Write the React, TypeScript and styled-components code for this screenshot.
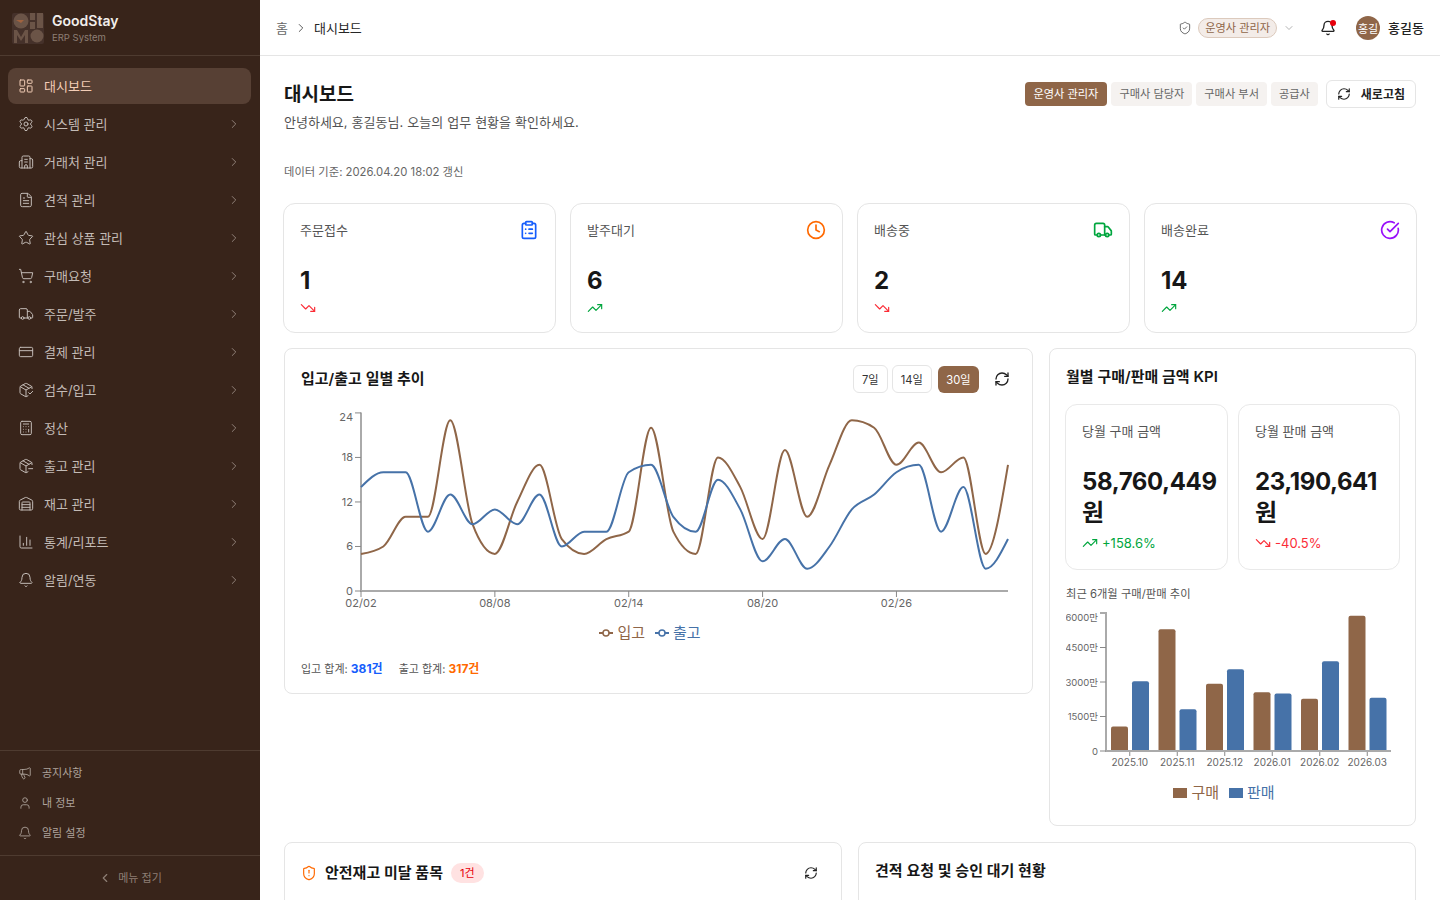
import styled, { createGlobalStyle } from "styled-components";
import {
  Bell,
  Building2,
  Calculator,
  ChartColumn,
  ChevronDown,
  ChevronLeft,
  ChevronRight,
  CircleCheckBig,
  ClipboardList,
  Clock,
  CreditCard,
  FileText,
  LayoutDashboard,
  Megaphone,
  PackageCheck,
  PackageMinus,
  RefreshCw,
  Settings,
  ShieldAlert,
  ShieldCheck,
  ShoppingCart,
  Star,
  TrendingDown,
  TrendingUp,
  Truck,
  User,
  Warehouse,
} from "lucide-react";

const BROWN = "#8f6648";
const BLUE = "#4672a8";

const GlobalStyle = createGlobalStyle`
  * { box-sizing: border-box; }
  html, body { margin: 0; padding: 0; height: 100%; overflow: hidden; }
  body {
    font-family: Inter, "Noto Sans CJK KR", sans-serif;
    color: #171717;
    background: #fff;
  }
`;

const Layout = styled.div`
  display: flex;
  width: 100%;
  height: 100vh;
  overflow: hidden;
`;

const Sidebar = styled.aside`
  display: flex;
  flex-direction: column;
  flex: 0 0 260px;
  height: 100%;
  background: #38241a;
`;

const Brand = styled.div`
  display: flex;
  align-items: center;
  gap: 8px;
  height: 56px;
  padding: 0 12px;
  border-bottom: 1px solid #4e3b30;
`;

const BrandText = styled.div`
  display: flex;
  flex-direction: column;
  gap: 2px;
  padding-top: 1px;
`;

const BrandName = styled.span`
  font-size: 14px;
  font-weight: 600;
  line-height: 17px;
  color: #f2eeeb;
`;

const BrandSub = styled.span`
  font-size: 9.5px;
  line-height: 14px;
  color: #8e7f75;
`;

const Nav = styled.nav`
  display: flex;
  flex: 1;
  flex-direction: column;
  gap: 2px;
  padding: 12px 9px 0 8px;
`;

const NavItem = styled.div<{ $active?: boolean }>`
  display: flex;
  align-items: center;
  gap: 10px;
  height: 36px;
  padding: 0 10px;
  border-radius: 8px;
  font-size: 13px;
  background: ${(p) => (p.$active ? "#574034" : "transparent")};
  color: ${(p) => (p.$active ? "#f3cdb6" : "#c3bbb6")};
`;

const NavLabel = styled.span`
  flex: 1;
  padding-bottom: 2px;
`;

const NavChevron = styled(ChevronRight)`
  color: #9a8c83;
`;

const SideFooter = styled.div`
  display: flex;
  flex-direction: column;
  padding: 7px 8px;
  border-top: 1px solid #4e3b30;
`;

const FooterItem = styled.div`
  display: flex;
  align-items: center;
  gap: 10px;
  height: 30px;
  padding: 0 10px;
  font-size: 11px;
  color: #aea39c;
`;

const FooterLabel = styled.span`
  padding-bottom: 2px;
`;

const Collapse = styled.div`
  display: flex;
  align-items: center;
  justify-content: center;
  gap: 6px;
  height: 45px;
  border-top: 1px solid #4e3b30;
  font-size: 11px;
  color: #8e7f75;
`;

const Main = styled.div`
  display: flex;
  flex: 1;
  min-width: 0;
  flex-direction: column;
  overflow: hidden;
`;

const Header = styled.header`
  display: flex;
  flex: 0 0 56px;
  align-items: center;
  justify-content: space-between;
  padding: 0 16px;
  border-bottom: 1px solid #e5e5e5;
  background: #fff;
`;

const Crumbs = styled.div`
  display: flex;
  align-items: center;
  gap: 6px;
  font-size: 13px;
  color: #262626;
`;

const CrumbHome = styled.span`
  color: #666;
`;

const CrumbChevron = styled(ChevronRight)`
  color: #444;
`;

const HeaderRight = styled.div`
  display: flex;
  align-items: center;
`;

const RoleGroup = styled.div`
  display: flex;
  align-items: center;
  gap: 6px;
  margin-right: 25px;
  color: #555;
`;

const RolePill = styled.span`
  height: 20px;
  margin-top: 1px;
  padding: 0 6px;
  border: 1px solid #dccabd;
  border-radius: 10px;
  background: #f3ece8;
  font-size: 11.2px;
  line-height: 18px;
  color: #8f6648;
`;

const RoleCaret = styled(ChevronDown)`
  color: #999;
`;

const BellWrap = styled.div`
  position: relative;
  display: flex;
  margin-right: 20px;
  color: #222;
`;

const BellDot = styled.span`
  position: absolute;
  top: 0;
  right: 0;
  width: 6px;
  height: 6px;
  border-radius: 50%;
  background: #e7000b;
`;

const Avatar = styled.div`
  display: flex;
  align-items: center;
  justify-content: center;
  width: 24px;
  height: 24px;
  margin-right: 8px;
  border-radius: 50%;
  background: #8f6648;
  font-size: 11px;
  color: #fff;
`;

const UserName = styled.span`
  font-size: 13px;
  font-weight: 500;
  color: #222;
`;

const Content = styled.main`
  display: flex;
  flex-direction: column;
  padding: 24px;
`;

const TitleRow = styled.div`
  display: flex;
  align-items: flex-start;
  justify-content: space-between;
`;

const TitleBlock = styled.div`
  display: flex;
  flex-direction: column;
`;

const PageTitle = styled.h1`
  margin: 0;
  font-size: 19px;
  font-weight: 700;
  line-height: 30px;
  color: #171717;
`;

const PageSub = styled.p`
  margin: 2px 0 0;
  font-size: 13px;
  line-height: 20px;
  word-spacing: 0.4px;
  color: #525252;
`;

const RoleTabs = styled.div`
  display: flex;
  align-items: center;
  gap: 4px;
`;

const RoleTab = styled.button<{ $active?: boolean }>`
  height: 24px;
  padding: ${(p) => (p.$active ? "0 9px 2px" : "0 8px 2px")};
  border: 0;
  border-radius: 4px;
  font-family: inherit;
  font-size: 11.2px;
  background: ${(p) => (p.$active ? "#8f6648" : "#f5f2f0")};
  color: ${(p) => (p.$active ? "#fff" : "#666")};
`;

const RefreshButton = styled.button`
  display: flex;
  align-items: center;
  gap: 10px;
  height: 28px;
  margin-left: 4px;
  padding: 0 10px 1px;
  border: 1px solid #e5e5e5;
  border-radius: 6px;
  background: #fff;
  font-family: inherit;
  font-size: 12px;
  font-weight: 600;
  color: #222;
`;

const Stamp = styled.div`
  margin-top: 32px;
  font-size: 11.3px;
  line-height: 16px;
  color: #666;
`;

const StatGrid = styled.div`
  display: grid;
  grid-template-columns: repeat(4, 273px);
  gap: 14px;
  margin: 23px -1px 0;
`;

const StatCard = styled.div`
  display: flex;
  flex-direction: column;
  height: 130px;
  padding: 16px;
  border: 1px solid #e5e5e5;
  border-radius: 12px;
  background: #fff;
`;

const StatTop = styled.div`
  display: flex;
  align-items: flex-start;
  justify-content: space-between;
  height: 20px;
`;

const StatLabel = styled.span`
  font-size: 13px;
  line-height: 20px;
  color: #555;
`;

const StatValue = styled.div`
  margin-top: 25px;
  font-size: 24px;
  font-weight: 700;
  line-height: 32px;
  color: #171717;
`;

const StatTrend = styled.div`
  display: flex;
  margin-top: 3px;
`;

const ChartRow = styled.div`
  display: grid;
  grid-template-columns: 749px 367px;
  align-items: start;
  gap: 16px;
  margin-top: 15px;
`;

const Card = styled.section`
  display: flex;
  flex-direction: column;
  padding: 16px 16px 15px;
  border: 1px solid #e5e5e5;
  border-radius: 8px;
  background: #fff;
`;

const CardHead = styled.div`
  display: flex;
  align-items: center;
  justify-content: space-between;
  height: 28px;
`;

const CardTitle = styled.h2`
  margin: 0;
  font-size: 15px;
  font-weight: 600;
  line-height: 22px;
  color: #171717;
`;

const RangeGroup = styled.div`
  display: flex;
  align-items: center;
  gap: 4px;
  padding-right: 6px;
`;

const RangeButton = styled.button<{ $active?: boolean }>`
  height: ${(p) => (p.$active ? "27px" : "28px")};
  margin-left: ${(p) => (p.$active ? "2px" : "0")};
  padding: ${(p) => (p.$active ? "0 8.5px 1px" : "0 8px 1px")};
  border: ${(p) => (p.$active ? "0" : "1px solid #e5e5e5")};
  border-radius: 6px;
  background: ${(p) => (p.$active ? "#8f6648" : "#fff")};
  font-family: inherit;
  font-size: 11.2px;
  color: ${(p) => (p.$active ? "#fff" : "#333")};
`;

const IconButton = styled.span`
  display: flex;
  margin-left: 11px;
  color: #222;
`;

const TrendSvg = styled.svg`
  display: block;
  margin-top: 12px;
`;

const BarSvg = styled.svg`
  display: block;
  margin-top: 4px;
`;

const AxisText = styled.text`
  font-size: 11px;
  fill: #666;
`;

const BarAxisText = styled.text<{ $size: number }>`
  font-size: ${(p) => p.$size}px;
  fill: #666;
`;

const Legend = styled.div<{ $shift: number; $top: number }>`
  display: flex;
  justify-content: center;
  gap: 10px;
  height: 20px;
  margin-top: ${(p) => p.$top}px;
  padding-right: ${(p) => p.$shift}px;
  font-size: 15px;
  line-height: 20px;
`;

const LegendItem = styled.span<{ $color: string }>`
  display: flex;
  align-items: center;
  gap: 4px;
  color: ${(p) => p.$color};
`;

const LegendSwatch = styled.span<{ $color: string }>`
  width: 14px;
  height: 10px;
  background: ${(p) => p.$color};
`;

const Totals = styled.div`
  display: flex;
  gap: 16px;
  margin-top: 17px;
  font-size: 11px;
  line-height: 18px;
  color: #555;
`;

const TotalValue = styled.b<{ $color: string }>`
  font-size: 12px;
  font-weight: 700;
  color: ${(p) => p.$color};
`;

const KpiPanel = styled(Card)`
  padding-bottom: 22px;
`;

const KpiHead = styled.div`
  display: flex;
  align-items: center;
  height: 22px;
  margin-top: 1px;
`;

const KpiGrid = styled.div`
  display: grid;
  grid-template-columns: 163px 162px;
  gap: 10px;
  margin: 16px 0 0 -1px;
`;

const KpiCard = styled.div`
  display: flex;
  flex-direction: column;
  height: 166px;
  padding: 16px;
  border: 1px solid #e9e9e9;
  border-radius: 12px;
`;

const KpiLabel = styled.span`
  font-size: 13px;
  line-height: 20px;
  color: #555;
`;

const KpiValue = styled.div`
  margin-top: 25px;
  font-size: 24px;
  font-weight: 700;
  line-height: 31px;
  letter-spacing: -0.4px;
  color: #171717;
`;

const KpiTrend = styled.div<{ $color: string }>`
  display: flex;
  align-items: center;
  gap: 4px;
  margin-top: 7px;
  font-size: 13px;
  line-height: 16px;
  color: ${(p) => p.$color};
`;

const MiniTitle = styled.div`
  margin-top: 16px;
  font-size: 11.3px;
  line-height: 16px;
  color: #555;
`;

const BottomRow = styled.div`
  display: grid;
  grid-template-columns: 1fr 1fr;
  gap: 16px;
  margin-top: 16px;
`;

const PanelCard = styled(Card)`
  min-height: 300px;
`;

const PanelHead = styled.div`
  display: flex;
  align-items: center;
  height: 28px;
`;

const PanelTitle = styled.h2<{ $compact?: boolean }>`
  margin: ${(p) => (p.$compact ? "-4px 0 0" : "0")};
  font-size: 15px;
  font-weight: 600;
  line-height: 22px;
  color: #171717;
`;

const PanelIcon = styled.span`
  display: flex;
  margin-right: 8px;
  color: #ff6900;
`;

const CountBadge = styled.span`
  height: 20px;
  margin-left: 8px;
  padding: 0 9px;
  border-radius: 10px;
  background: #ffe2e2;
  font-size: 11px;
  line-height: 20px;
  color: #e7000b;
`;

const PanelAction = styled.span`
  display: flex;
  margin-left: auto;
  padding-right: 7px;
  color: #222;
`;

const mainMenu = [
  { label: "시스템 관리", Icon: Settings },
  { label: "거래처 관리", Icon: Building2 },
  { label: "견적 관리", Icon: FileText },
  { label: "관심 상품 관리", Icon: Star },
  { label: "구매요청", Icon: ShoppingCart },
  { label: "주문/발주", Icon: Truck },
  { label: "결제 관리", Icon: CreditCard },
  { label: "검수/입고", Icon: PackageCheck },
  { label: "정산", Icon: Calculator },
  { label: "출고 관리", Icon: PackageMinus },
  { label: "재고 관리", Icon: Warehouse },
  { label: "통계/리포트", Icon: ChartColumn },
  { label: "알림/연동", Icon: Bell },
];

const footerMenu = [
  { label: "공지사항", Icon: Megaphone },
  { label: "내 정보", Icon: User },
  { label: "알림 설정", Icon: Bell },
];

const stats = [
  { label: "주문접수", value: 1, Icon: ClipboardList, color: "#155dfc", up: false },
  { label: "발주대기", value: 6, Icon: Clock, color: "#ff6900", up: true },
  { label: "배송중", value: 2, Icon: Truck, color: "#00a63e", up: false },
  { label: "배송완료", value: 14, Icon: CircleCheckBig, color: "#9810fa", up: true },
];

const inbound = [5, 6, 10, 10, 23, 9, 5, 12, 17, 7, 5, 7, 8, 22, 8, 5, 18, 14, 7, 19, 10, 17, 23, 22, 17, 20, 16, 18, 5, 17];
const outbound = [14, 16, 16, 8, 13, 9, 11, 9, 13, 6, 8, 8, 16, 17, 10, 8, 15, 11, 4, 7, 3, 6, 11, 13, 16, 17, 8, 14, 3, 7];

const months = [
  { label: "2025.10", buy: 1070, sell: 3030 },
  { label: "2025.11", buy: 5290, sell: 1810 },
  { label: "2025.12", buy: 2920, sell: 3550 },
  { label: "2026.01", buy: 2550, sell: 2500 },
  { label: "2026.02", buy: 2270, sell: 3900 },
  { label: "2026.03", buy: 5876, sell: 2319 },
];

// same curve as d3 curveMonotoneX
function monotonePath(pts: [number, number][]) {
  const n = pts.length;
  const h: number[] = [];
  const s: number[] = [];
  for (let i = 0; i < n - 1; i++) {
    h[i] = pts[i + 1][0] - pts[i][0];
    s[i] = (pts[i + 1][1] - pts[i][1]) / h[i];
  }
  const t: number[] = new Array(n).fill(0);
  for (let i = 1; i < n - 1; i++) {
    const p = (s[i - 1] * h[i] + s[i] * h[i - 1]) / (h[i - 1] + h[i]);
    const sa = s[i - 1] < 0 ? -1 : 1;
    const sb = s[i] < 0 ? -1 : 1;
    t[i] = (sa + sb) * Math.min(Math.abs(s[i - 1]), Math.abs(s[i]), 0.5 * Math.abs(p));
  }
  t[0] = (3 * s[0] - t[1]) / 2;
  t[n - 1] = (3 * s[n - 2] - t[n - 2]) / 2;
  let d = `M${pts[0][0]},${pts[0][1]}`;
  for (let i = 0; i < n - 1; i++) {
    const dx = h[i] / 3;
    d += `C${pts[i][0] + dx},${pts[i][1] + dx * t[i]} ${pts[i + 1][0] - dx},${pts[i + 1][1] - dx * t[i + 1]} ${pts[i + 1][0]},${pts[i + 1][1]}`;
  }
  return d;
}

function Logo() {
  return (
    <svg width="32" height="32" viewBox="0 0 32 32" fill="#6b5447">
      <rect x="0" y="1" width="32" height="31" rx="2" fill="#45312a" />
      <circle cx="9" cy="9" r="7.5" />
      <path d="M4 8h8l-3 3z" fill="#a0623f" />
      <rect x="18" y="1" width="5" height="7" />
      <rect x="25" y="1" width="6" height="15" />
      <rect x="18" y="10" width="5" height="7" />
      <path d="M2 31V18h3l4 7 4-7h3v13h-3v-8l-4 6-4-6v8z" />
      <circle cx="25" cy="24" r="6.5" />
    </svg>
  );
}

function LineMark({ color }: { color: string }) {
  return (
    <svg width="14" height="14" viewBox="0 0 14 14" fill="none">
      <path d="M0 7h4.5M9.5 7H14" stroke={color} strokeWidth="2" />
      <circle cx="7" cy="7" r="3" fill="#fff" stroke={color} strokeWidth="1.5" />
    </svg>
  );
}

function TrendChart() {
  const x0 = 361;
  const step = 647 / 29;
  const y = (v: number) => 591 - v * 7.42;
  const line = (vals: number[]) => monotonePath(vals.map((v, i) => [x0 + i * step, y(v)]));
  const xTicks = [
    { i: 0, label: "02/02" },
    { i: 6, label: "08/08" },
    { i: 12, label: "02/14" },
    { i: 18, label: "08/20" },
    { i: 24, label: "02/26" },
  ];
  return (
    <TrendSvg width="715" height="215" viewBox="301 405 715 215" fill="none">
      <path d="M361 412.5V591H1008" stroke="#aaa" strokeWidth="2" />
      {[0, 6, 12, 18, 24].map((v) => (
        <g key={v}>
          <path d={`M355 ${y(v)}H361`} stroke="#888" />
          <AxisText x="353" y={(v === 24 ? y(v) + 4 : y(v)) + 4} textAnchor="end">
            {v}
          </AxisText>
        </g>
      ))}
      {xTicks.map((t) => (
        <g key={t.label}>
          <path d={`M${x0 + t.i * step} 591v6`} stroke="#888" />
          <AxisText x={x0 + t.i * step} y="607" textAnchor="middle">
            {t.label}
          </AxisText>
        </g>
      ))}
      <path d={line(inbound)} stroke={BROWN} strokeWidth="2" />
      <path d={line(outbound)} stroke={BLUE} strokeWidth="2" />
    </TrendSvg>
  );
}

function MonthlyChart() {
  const y = (v: number) => 751 - v * 0.023;
  const cat = 285 / 6;
  return (
    <BarSvg width="334" height="170" viewBox="1066 606 334 170" fill="none">
      {months.map((m, i) => {
        const left = 1106 + i * cat;
        return (
          <g key={m.label}>
            <path
              d={`M${left + 5} 751V${y(m.buy) + 2}q0-2 2-2h13q2 0 2 2V751z`}
              fill={BROWN}
            />
            <path
              d={`M${left + 26} 751V${y(m.sell) + 2}q0-2 2-2h13q2 0 2 2V751z`}
              fill={BLUE}
            />
            <path d={`M${left + cat / 2} 751v5`} stroke="#888" />
            <BarAxisText $size={10} x={left + cat / 2} y="766" textAnchor="middle">
              {m.label}
            </BarAxisText>
          </g>
        );
      })}
      <path d="M1100 613H1106V751H1391" stroke="#aaa" strokeWidth="2" />
      {[1500, 3000, 4500].map((v) => (
        <path key={v} d={`M1100 ${y(v)}H1106`} stroke="#888" />
      ))}
      <path d="M1100 751H1106" stroke="#888" />
      {[0, 1500, 3000, 4500, 6000].map((v) => (
        <BarAxisText
          key={v}
          $size={9.5}
          x="1098"
          y={(v === 6000 ? y(v) + 4 : y(v)) + 3.5}
          textAnchor="end"
        >
          {v === 0 ? "0" : `${v}만`}
        </BarAxisText>
      ))}
    </BarSvg>
  );
}

export default function App() {
  return (
    <>
      <GlobalStyle />
      <Layout>
        <Sidebar>
          <Brand>
            <Logo />
            <BrandText>
              <BrandName>GoodStay</BrandName>
              <BrandSub>ERP System</BrandSub>
            </BrandText>
          </Brand>
          <Nav>
            <NavItem $active>
              <LayoutDashboard size={16} strokeWidth={1.5} />
              <NavLabel>대시보드</NavLabel>
            </NavItem>
            {mainMenu.map(({ label, Icon }) => (
              <NavItem key={label}>
                <Icon size={16} strokeWidth={1.5} />
                <NavLabel>{label}</NavLabel>
                <NavChevron size={14} strokeWidth={1.5} />
              </NavItem>
            ))}
          </Nav>
          <SideFooter>
            {footerMenu.map(({ label, Icon }) => (
              <FooterItem key={label}>
                <Icon size={14} strokeWidth={1.5} />
                <FooterLabel>{label}</FooterLabel>
              </FooterItem>
            ))}
          </SideFooter>
          <Collapse>
            <ChevronLeft size={14} strokeWidth={2} />
            <FooterLabel>메뉴 접기</FooterLabel>
          </Collapse>
        </Sidebar>
        <Main>
          <Header>
            <Crumbs>
              <CrumbHome>홈</CrumbHome>
              <CrumbChevron size={14} strokeWidth={1.5} />
              <span>대시보드</span>
            </Crumbs>
            <HeaderRight>
              <RoleGroup>
                <ShieldCheck size={14} strokeWidth={1.5} />
                <RolePill>운영사 관리자</RolePill>
                <RoleCaret size={12} strokeWidth={1.5} />
              </RoleGroup>
              <BellWrap>
                <Bell size={16} strokeWidth={2} />
                <BellDot />
              </BellWrap>
              <Avatar>홍길</Avatar>
              <UserName>홍길동</UserName>
            </HeaderRight>
          </Header>
          <Content>
            <TitleRow>
              <TitleBlock>
                <PageTitle>대시보드</PageTitle>
                <PageSub>안녕하세요, 홍길동님. 오늘의 업무 현황을 확인하세요.</PageSub>
              </TitleBlock>
              <RoleTabs>
                <RoleTab $active>운영사 관리자</RoleTab>
                <RoleTab>구매사 담당자</RoleTab>
                <RoleTab>구매사 부서</RoleTab>
                <RoleTab>공급사</RoleTab>
                <RefreshButton>
                  <RefreshCw size={14} strokeWidth={2} />
                  새로고침
                </RefreshButton>
              </RoleTabs>
            </TitleRow>
            <Stamp>데이터 기준: 2026.04.20 18:02 갱신</Stamp>
            <StatGrid>
              {stats.map(({ label, value, Icon, color, up }) => (
                <StatCard key={label}>
                  <StatTop>
                    <StatLabel>{label}</StatLabel>
                    <Icon size={20} color={color} strokeWidth={2} />
                  </StatTop>
                  <StatValue>{value}</StatValue>
                  <StatTrend>
                    {up ? (
                      <TrendingUp size={16} color="#00a63e" strokeWidth={1.75} />
                    ) : (
                      <TrendingDown size={16} color="#fb2c36" strokeWidth={1.75} />
                    )}
                  </StatTrend>
                </StatCard>
              ))}
            </StatGrid>
            <ChartRow>
              <Card>
                <CardHead>
                  <CardTitle>입고/출고 일별 추이</CardTitle>
                  <RangeGroup>
                    <RangeButton>7일</RangeButton>
                    <RangeButton>14일</RangeButton>
                    <RangeButton $active>30일</RangeButton>
                    <IconButton>
                      <RefreshCw size={16} strokeWidth={2} />
                    </IconButton>
                  </RangeGroup>
                </CardHead>
                <TrendChart />
                <Legend $shift={17} $top={3}>
                  <LegendItem $color={BROWN}>
                    <LineMark color={BROWN} />
                    입고
                  </LegendItem>
                  <LegendItem $color={BLUE}>
                    <LineMark color={BLUE} />
                    출고
                  </LegendItem>
                </Legend>
                <Totals>
                  <span>
                    입고 합계: <TotalValue $color="#155dfc">381건</TotalValue>
                  </span>
                  <span>
                    출고 합계: <TotalValue $color="#ff6900">317건</TotalValue>
                  </span>
                </Totals>
              </Card>
              <KpiPanel>
                <KpiHead>
                  <CardTitle>월별 구매/판매 금액 KPI</CardTitle>
                </KpiHead>
                <KpiGrid>
                  <KpiCard>
                    <KpiLabel>당월 구매 금액</KpiLabel>
                    <KpiValue>58,760,449원</KpiValue>
                    <KpiTrend $color="#00a63e">
                      <TrendingUp size={16} strokeWidth={1.75} />
                      +158.6%
                    </KpiTrend>
                  </KpiCard>
                  <KpiCard>
                    <KpiLabel>당월 판매 금액</KpiLabel>
                    <KpiValue>23,190,641원</KpiValue>
                    <KpiTrend $color="#fb2c36">
                      <TrendingDown size={16} strokeWidth={1.75} />
                      -40.5%
                    </KpiTrend>
                  </KpiCard>
                </KpiGrid>
                <MiniTitle>최근 6개월 구매/판매 추이</MiniTitle>
                <MonthlyChart />
                <Legend $shift={17} $top={7}>
                  <LegendItem $color={BROWN}>
                    <LegendSwatch $color={BROWN} />
                    구매
                  </LegendItem>
                  <LegendItem $color={BLUE}>
                    <LegendSwatch $color={BLUE} />
                    판매
                  </LegendItem>
                </Legend>
              </KpiPanel>
            </ChartRow>
            <BottomRow>
              <PanelCard>
                <PanelHead>
                  <PanelIcon>
                    <ShieldAlert size={16} strokeWidth={1.75} />
                  </PanelIcon>
                  <PanelTitle>안전재고 미달 품목</PanelTitle>
                  <CountBadge>1건</CountBadge>
                  <PanelAction>
                    <RefreshCw size={14} strokeWidth={2} />
                  </PanelAction>
                </PanelHead>
              </PanelCard>
              <PanelCard>
                <PanelHead>
                  <PanelTitle $compact>견적 요청 및 승인 대기 현황</PanelTitle>
                </PanelHead>
              </PanelCard>
            </BottomRow>
          </Content>
        </Main>
      </Layout>
    </>
  );
}
